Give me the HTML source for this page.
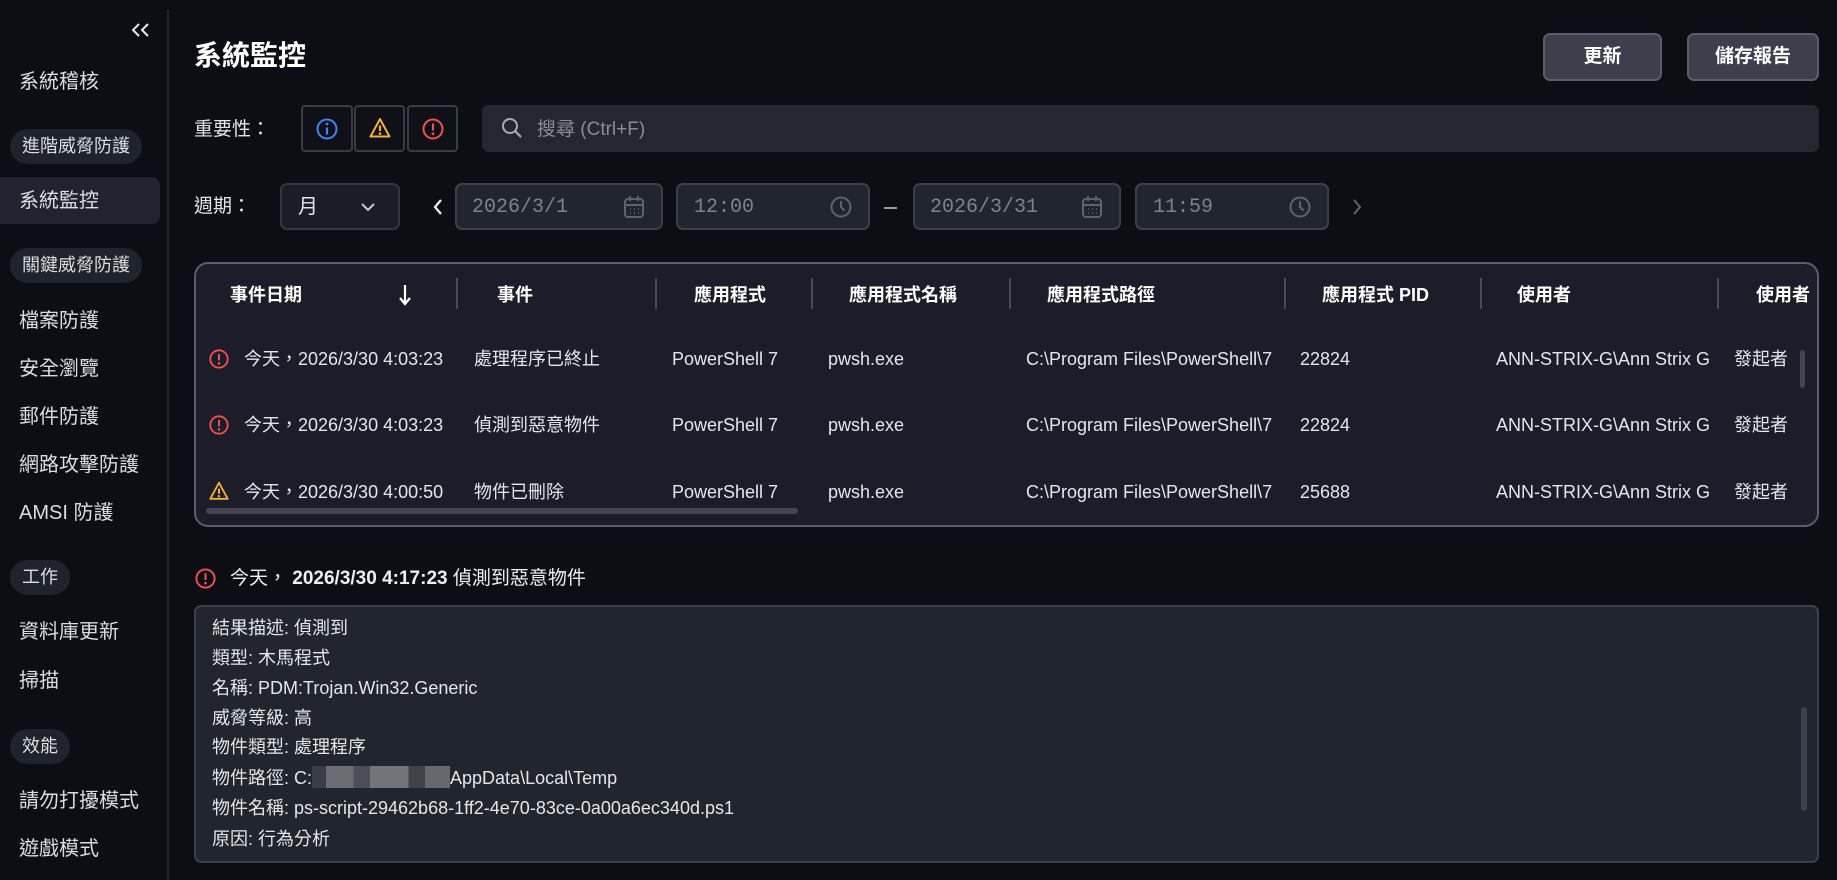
<!DOCTYPE html>
<html><head><meta charset="utf-8">
<style>
*{margin:0;padding:0;box-sizing:border-box}
body{width:1837px;height:880px;background:#0c0d15;color:#e6e6ea;font-family:"Liberation Sans","Noto Sans CJK TC",sans-serif;position:relative;overflow:hidden}
.a{position:absolute;white-space:nowrap}
.nav{left:19px;font-size:20px;color:#dcdce2;line-height:28px}
.pill{left:10px;height:35px;border-radius:18px;background:#1f232b;font-size:18px;line-height:35px;padding:0 12px;color:#dcdce2}
.box{border:2px solid #393b45;background:#0f1018;border-radius:4px}
.btn{background:#3e3f4c;border:2px solid #5b5c6a;border-radius:7px;font-size:19px;font-weight:bold;text-align:center;line-height:44px;color:#fff}
.inp{background:#21252d;border:2px solid #3b3f49;border-radius:7px;height:47px}
.mono{font-family:"Liberation Mono",monospace;font-size:20px;color:#7e828c;line-height:43px}
.th{font-size:18px;font-weight:bold;color:#fff;line-height:24px;top:283px}
.sep{width:2px;height:31px;background:#4a4b56;top:278px}
.td{font-size:18px;color:#e6e6ea;line-height:22px}
.dl{left:212px;font-size:18px;color:#e6e6ea;line-height:24px}
</style></head><body>
<!-- sidebar -->
<div class="a" style="left:167px;top:9px;width:2px;height:871px;background:#22232b"></div>
<svg class="a" style="left:130px;top:22px" width="22" height="16" viewBox="0 0 22 16"><path d="M9 2L3 8l6 6M18 2l-6 6 6 6" fill="none" stroke="#e8e8ec" stroke-width="2"/></svg>
<div class="a nav" style="top:68px">系統稽核</div>
<div class="a pill" style="top:129px">進階威脅防護</div>
<div class="a" style="left:0;top:177px;width:160px;height:47px;background:#22232e;border-radius:0 8px 8px 0"></div>
<div class="a nav" style="top:187px">系統監控</div>
<div class="a pill" style="top:248px">關鍵威脅防護</div>
<div class="a nav" style="top:307px">檔案防護</div>
<div class="a nav" style="top:355px">安全瀏覽</div>
<div class="a nav" style="top:403px">郵件防護</div>
<div class="a nav" style="top:451px">網路攻擊防護</div>
<div class="a nav" style="top:499px">AMSI 防護</div>
<div class="a pill" style="top:560px">工作</div>
<div class="a nav" style="top:618px">資料庫更新</div>
<div class="a nav" style="top:667px">掃描</div>
<div class="a pill" style="top:729px">效能</div>
<div class="a nav" style="top:787px">請勿打擾模式</div>
<div class="a nav" style="top:835px">遊戲模式</div>

<!-- header -->
<div class="a" style="left:194px;top:39px;font-size:28px;font-weight:bold;color:#fff;line-height:34px">系統監控</div>
<div class="a btn" style="left:1543px;top:33px;width:119px;height:48px">更新</div>
<div class="a btn" style="left:1687px;top:33px;width:132px;height:48px">儲存報告</div>

<div class="a" style="left:194px;top:117px;font-size:19px;line-height:26px">重要性：</div>
<div class="a box" style="left:301px;top:105px;width:52px;height:47px"></div>
<div class="a box" style="left:354px;top:105px;width:51px;height:47px"></div>
<div class="a box" style="left:407px;top:105px;width:51px;height:47px"></div>
<svg class="a" style="left:315px;top:117px" width="24" height="24" viewBox="0 0 24 24"><circle cx="12" cy="12" r="9.5" fill="none" stroke="#3f86f5" stroke-width="2"/><path d="M12 10.5v7" stroke="#3f86f5" stroke-width="2.2"/><circle cx="12" cy="7" r="1.4" fill="#3f86f5"/></svg>
<svg class="a" style="left:368px;top:116px" width="24" height="24" viewBox="0 0 24 24"><path d="M12 3L2.5 20.5h19z" fill="none" stroke="#f2b13a" stroke-width="2" stroke-linejoin="round"/><path d="M12 9.5v5.5" stroke="#f2b13a" stroke-width="2.2"/><circle cx="12" cy="17.6" r="1.3" fill="#f2b13a"/></svg>
<svg class="a" style="left:421px;top:117px" width="24" height="24" viewBox="0 0 24 24"><circle cx="12" cy="12" r="9.5" fill="none" stroke="#f05252" stroke-width="2"/><path d="M12 6.5v7" stroke="#f05252" stroke-width="2.2"/><circle cx="12" cy="16.8" r="1.4" fill="#f05252"/></svg>
<div class="a" style="left:482px;top:105px;width:1337px;height:47px;background:#252630;border-radius:7px"></div>
<svg class="a" style="left:500px;top:116px" width="24" height="24" viewBox="0 0 24 24"><circle cx="10" cy="10" r="7" fill="none" stroke="#a8a9b2" stroke-width="2"/><path d="M15 15l6 6" stroke="#a8a9b2" stroke-width="2.2"/></svg>
<div class="a" style="left:537px;top:117px;font-size:19px;color:#8a8b95;line-height:26px">搜尋 (Ctrl+F)</div>

<div class="a" style="left:194px;top:194px;font-size:19px;line-height:26px">週期：</div>
<div class="a" style="left:280px;top:183px;width:120px;height:47px;background:#1b1c26;border:2px solid #353641;border-radius:7px"></div>
<div class="a" style="left:298px;top:194px;font-size:20px;line-height:26px">月</div>
<svg class="a" style="left:360px;top:201px" width="16" height="12" viewBox="0 0 16 12"><path d="M2 3l6 6 6-6" fill="none" stroke="#c8c9d0" stroke-width="2"/></svg>
<svg class="a" style="left:432px;top:198px" width="12" height="18" viewBox="0 0 12 18"><path d="M9 2L3 9l6 7" fill="none" stroke="#f0f0f4" stroke-width="2.2"/></svg>
<div class="a inp" style="left:455px;top:183px;width:208px"></div>
<div class="a mono" style="left:472px;top:186px">2026/3/1</div>
<svg class="a" style="left:623px;top:195px" width="22" height="24" viewBox="0 0 22 24"><rect x="2" y="4" width="18" height="18" rx="3" fill="none" stroke="#5f636d" stroke-width="2"/><path d="M2 10h18M7 1v5M15 1v5" stroke="#5f636d" stroke-width="2"/><path d="M7 14h1M11 14h1M15 14h1M7 18h1M11 18h1M15 18h1" stroke="#5f636d" stroke-width="1.6"/></svg>
<div class="a inp" style="left:676px;top:183px;width:194px"></div>
<div class="a mono" style="left:694px;top:186px">12:00</div>
<svg class="a" style="left:829px;top:195px" width="24" height="24" viewBox="0 0 24 24"><circle cx="12" cy="12" r="9.5" fill="none" stroke="#5f636d" stroke-width="2"/><path d="M12 6v6l3.5 3.5" fill="none" stroke="#5f636d" stroke-width="2"/></svg>
<div class="a" style="left:884px;top:207px;width:13px;height:2px;background:#9a9ba4"></div>
<div class="a inp" style="left:913px;top:183px;width:208px"></div>
<div class="a mono" style="left:930px;top:186px">2026/3/31</div>
<svg class="a" style="left:1081px;top:195px" width="22" height="24" viewBox="0 0 22 24"><rect x="2" y="4" width="18" height="18" rx="3" fill="none" stroke="#5f636d" stroke-width="2"/><path d="M2 10h18M7 1v5M15 1v5" stroke="#5f636d" stroke-width="2"/><path d="M7 14h1M11 14h1M15 14h1M7 18h1M11 18h1M15 18h1" stroke="#5f636d" stroke-width="1.6"/></svg>
<div class="a inp" style="left:1135px;top:183px;width:194px"></div>
<div class="a mono" style="left:1153px;top:186px">11:59</div>
<svg class="a" style="left:1288px;top:195px" width="24" height="24" viewBox="0 0 24 24"><circle cx="12" cy="12" r="9.5" fill="none" stroke="#5f636d" stroke-width="2"/><path d="M12 6v6l3.5 3.5" fill="none" stroke="#5f636d" stroke-width="2"/></svg>
<svg class="a" style="left:1351px;top:198px" width="12" height="18" viewBox="0 0 12 18"><path d="M3 2l6 7-6 7" fill="none" stroke="#5f636d" stroke-width="2"/></svg>

<!-- table -->
<div class="a" style="left:194px;top:262px;width:1625px;height:265px;background:#1d1d29;border:2px solid #5c5d68;border-radius:14px;overflow:hidden"></div>
<div class="a th" style="left:230px">事件日期</div>
<svg class="a" style="left:398px;top:284px" width="14" height="22" viewBox="0 0 14 22"><path d="M7 1v18M2 14l5 6 5-6" fill="none" stroke="#fff" stroke-width="2.2"/></svg>
<div class="a sep" style="left:456px"></div>
<div class="a th" style="left:497px">事件</div>
<div class="a sep" style="left:655px"></div>
<div class="a th" style="left:694px">應用程式</div>
<div class="a sep" style="left:811px"></div>
<div class="a th" style="left:849px">應用程式名稱</div>
<div class="a sep" style="left:1009px"></div>
<div class="a th" style="left:1047px">應用程式路徑</div>
<div class="a sep" style="left:1284px"></div>
<div class="a th" style="left:1322px">應用程式 PID</div>
<div class="a sep" style="left:1480px"></div>
<div class="a th" style="left:1517px">使用者</div>
<div class="a sep" style="left:1717px"></div>
<div class="a th" style="left:1756px;width:61px;overflow:hidden">使用者</div>

<svg class="a" style="left:208px;top:348px" width="22" height="22" viewBox="0 0 24 24"><circle cx="12" cy="12" r="9.5" fill="none" stroke="#f05252" stroke-width="2"/><path d="M12 6.5v7" stroke="#f05252" stroke-width="2.2"/><circle cx="12" cy="16.8" r="1.4" fill="#f05252"/></svg>
<div class="a td" style="left:244px;top:348px">今天，2026/3/30 4:03:23</div>
<div class="a td" style="left:474px;top:348px">處理程序已終止</div>
<div class="a td" style="left:672px;top:348px">PowerShell 7</div>
<div class="a td" style="left:828px;top:348px">pwsh.exe</div>
<div class="a td" style="left:1026px;top:348px;width:258px;overflow:hidden">C:\Program Files\PowerShell\7</div>
<div class="a td" style="left:1300px;top:348px">22824</div>
<div class="a td" style="left:1496px;top:348px;width:230px;overflow:hidden">ANN-STRIX-G\Ann Strix G</div>
<div class="a td" style="left:1734px;top:348px">發起者</div>

<svg class="a" style="left:208px;top:414px" width="22" height="22" viewBox="0 0 24 24"><circle cx="12" cy="12" r="9.5" fill="none" stroke="#f05252" stroke-width="2"/><path d="M12 6.5v7" stroke="#f05252" stroke-width="2.2"/><circle cx="12" cy="16.8" r="1.4" fill="#f05252"/></svg>
<div class="a td" style="left:244px;top:414px">今天，2026/3/30 4:03:23</div>
<div class="a td" style="left:474px;top:414px">偵測到惡意物件</div>
<div class="a td" style="left:672px;top:414px">PowerShell 7</div>
<div class="a td" style="left:828px;top:414px">pwsh.exe</div>
<div class="a td" style="left:1026px;top:414px;width:258px;overflow:hidden">C:\Program Files\PowerShell\7</div>
<div class="a td" style="left:1300px;top:414px">22824</div>
<div class="a td" style="left:1496px;top:414px;width:230px;overflow:hidden">ANN-STRIX-G\Ann Strix G</div>
<div class="a td" style="left:1734px;top:414px">發起者</div>

<svg class="a" style="left:208px;top:480px" width="22" height="22" viewBox="0 0 24 24"><path d="M12 3L2.5 20.5h19z" fill="none" stroke="#f2b13a" stroke-width="2" stroke-linejoin="round"/><path d="M12 9.5v5.5" stroke="#f2b13a" stroke-width="2.2"/><circle cx="12" cy="17.6" r="1.3" fill="#f2b13a"/></svg>
<div class="a td" style="left:244px;top:481px">今天，2026/3/30 4:00:50</div>
<div class="a td" style="left:474px;top:481px">物件已刪除</div>
<div class="a td" style="left:672px;top:481px">PowerShell 7</div>
<div class="a td" style="left:828px;top:481px">pwsh.exe</div>
<div class="a td" style="left:1026px;top:481px;width:258px;overflow:hidden">C:\Program Files\PowerShell\7</div>
<div class="a td" style="left:1300px;top:481px">25688</div>
<div class="a td" style="left:1496px;top:481px;width:230px;overflow:hidden">ANN-STRIX-G\Ann Strix G</div>
<div class="a td" style="left:1734px;top:481px">發起者</div>
<div class="a" style="left:206px;top:508px;width:592px;height:6px;background:#44454f;border-radius:3px"></div>
<div class="a" style="left:1800px;top:350px;width:5px;height:38px;background:#44454f;border-radius:3px"></div>

<!-- detail -->
<svg class="a" style="left:194px;top:567px" width="23" height="23" viewBox="0 0 24 24"><circle cx="12" cy="12" r="9.5" fill="none" stroke="#f05252" stroke-width="2"/><path d="M12 6.5v7" stroke="#f05252" stroke-width="2.2"/><circle cx="12" cy="16.8" r="1.4" fill="#f05252"/></svg>
<div class="a" style="left:230px;top:566px;font-size:19px;line-height:26px;color:#f0f0f4">今天， <b>2026/3/30 4:17:23</b> 偵測到惡意物件</div>
<div class="a" style="left:194px;top:605px;width:1625px;height:258px;background:#20252e;border:2px solid #3b3f4a;border-radius:7px"></div>
<div class="a dl" style="top:616px">結果描述: 偵測到</div>
<div class="a dl" style="top:646px">類型: 木馬程式</div>
<div class="a dl" style="top:676px">名稱: PDM:Trojan.Win32.Generic</div>
<div class="a dl" style="top:706px">威脅等級: 高</div>
<div class="a dl" style="top:735px">物件類型: 處理程序</div>
<div class="a dl" style="top:766px">物件路徑: C:<span style="display:inline-block;width:138px;height:22px;vertical-align:-4px;background:linear-gradient(90deg,#3a3d45 0 10%,#6a6d74 10% 30%,#4c4f57 30% 42%,#717479 42% 70%,#3f4249 70% 82%,#65686f 82% 100%)"></span>AppData\Local\Temp</div>
<div class="a dl" style="top:796px">物件名稱: ps-script-29462b68-1ff2-4e70-83ce-0a00a6ec340d.ps1</div>
<div class="a dl" style="top:827px">原因: 行為分析</div>
<div class="a" style="left:1801px;top:707px;width:6px;height:104px;background:#3d414c;border-radius:3px"></div>
</body></html>
